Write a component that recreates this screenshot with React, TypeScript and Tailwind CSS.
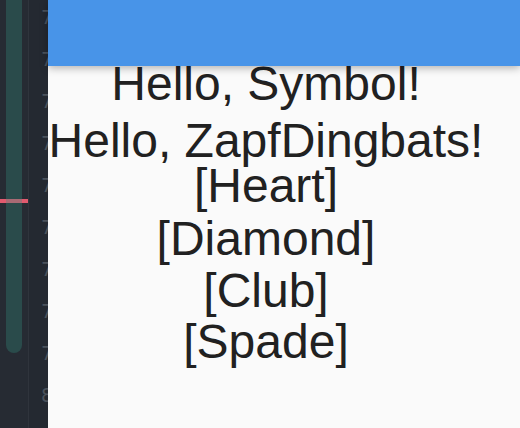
import React from "react";

const nums = ["71", "72", "73", "74", "75", "76", "77", "78", "79", "80"];
const lines: { t: string; h: string }[] = [
  { t: "Hello, Symbol!", h: "h-[57px]" },
  { t: "Hello, ZapfDingbats!", h: "h-[45px]" },
  { t: "[Heart]", h: "h-[53px]" },
  { t: "[Diamond]", h: "h-[52px]" },
  { t: "[Club]", h: "h-[51px]" },
  { t: "[Spade]", h: "h-[52px]" },
];

export default function App() {
  return (
    <div className="flex w-[520px] h-[428px] overflow-hidden bg-[#fafafa]">
      <div className="relative w-[48px] h-full shrink-0 bg-[#262b33] overflow-hidden flex">
        <div className="w-[6px] h-full" />
        <div className="w-[16px] h-[353px] bg-[#2a4b4b] rounded-b-[8px]" />
        <div className="w-[6px] h-full" />
        <div className="w-[1px] h-full bg-[#2f343c]" />
        <div className="flex-1 h-full bg-[#242931] overflow-hidden">
          <div className="-mt-[4px] pl-[12px] flex flex-col text-[19px] leading-[42px] text-[#4b525b] font-['DejaVu_Sans',sans-serif] whitespace-nowrap">
            {nums.map((n) => (
              <div key={n} className="h-[42px]">{n}</div>
            ))}
          </div>
        </div>
        <div className="absolute left-0 top-[199px] w-[28px] h-[4px] flex">
          <div className="w-[6px] bg-[#e05a6e]" />
          <div className="w-[16px] bg-[#a86a74]" />
          <div className="w-[6px] bg-[#e05a6e]" />
        </div>
      </div>
      <div className="relative flex-1 flex flex-col">
        <div className="relative z-10 h-[66px] shrink-0 bg-[#4894e8] shadow-[0_2px_8px_rgba(0,0,0,0.3)]" />
        <div className="-mt-[8px] w-[436px] flex flex-col text-center text-[48px] leading-[52px] text-[#212121] font-['Liberation_Sans',Arial,sans-serif] whitespace-nowrap">
          {lines.map((l) => (
            <div key={l.t} className={l.h}>{l.t}</div>
          ))}
        </div>
      </div>
    </div>
  );
}
